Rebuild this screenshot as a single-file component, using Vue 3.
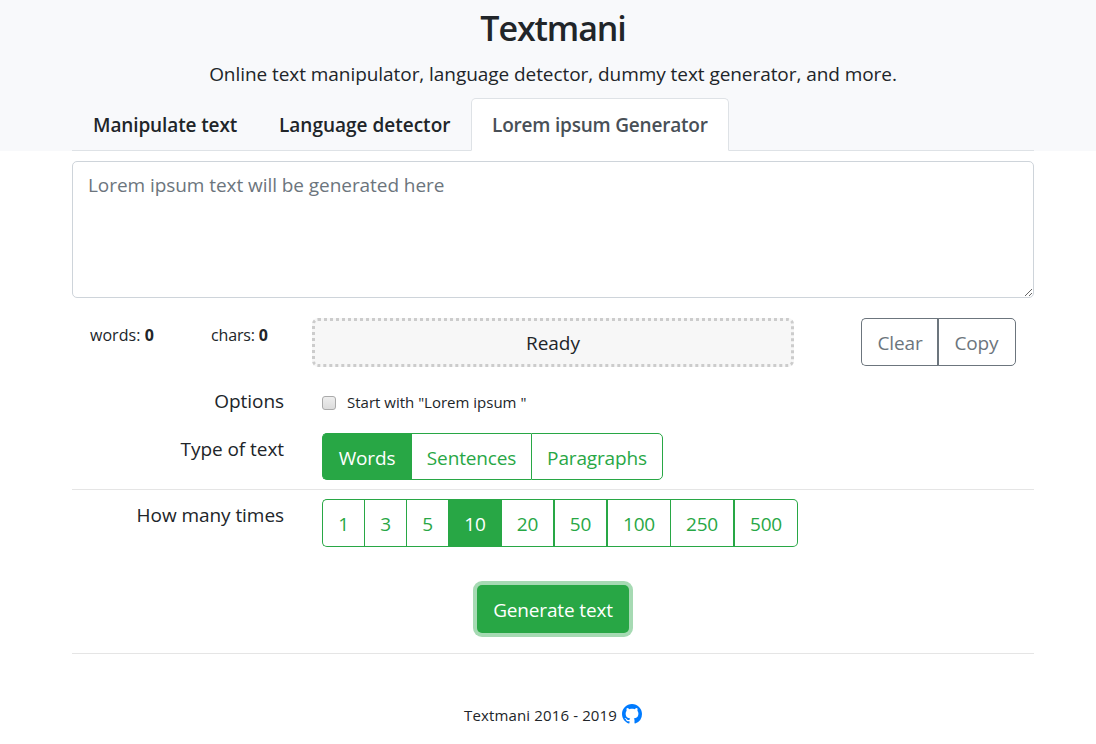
<script setup>
import { ref } from 'vue'

const tabs = [
  { label: 'Manipulate text', key: 'manipulate' },
  { label: 'Language detector', key: 'language' },
  { label: 'Lorem ipsum Generator', key: 'lorem' },
]
const activeTab = ref('lorem')
const types = [
  { label: 'Words', key: 'words' },
  { label: 'Sentences', key: 'sentences' },
  { label: 'Paragraphs', key: 'paragraphs' },
]
const type = ref('words')
const counts = [1, 3, 5, 10, 20, 50, 100, 250, 500]
const count = ref(10)
const startWithLorem = ref(false)
const output = ref('')
</script>

<template>
  <div class="page">
    <header class="header">
      <h1><span>Textmani</span></h1>
      <p class="lead"><span>Online text manipulator, language detector, dummy text generator, and more.</span></p>
      <nav class="tabs">
        <a v-for="t in tabs" :key="t.key" class="tab" :class="[t.key, { active: activeTab === t.key }]" @click="activeTab = t.key"><span>{{ t.label }}</span></a>
      </nav>
    </header>
    <main class="container">
      <textarea v-model="output" class="output" placeholder="Lorem ipsum text will be generated here"></textarea>

      <section class="status-row">
        <div class="stat words-stat">words: <b>0</b></div>
        <div class="stat chars-stat">chars: <b>0</b></div>
        <div class="status"><span>Ready</span></div>
        <div class="group grey">
          <button class="btn clear"><span>Clear</span></button>
          <button class="btn copy"><span>Copy</span></button>
        </div>
      </section>

      <section class="row options">
        <div class="label"><span>Options</span></div>
        <label class="check"><input v-model="startWithLorem" type="checkbox"><span>Start with "Lorem ipsum "</span></label>
      </section>

      <section class="row types">
        <div class="label"><span>Type of text</span></div>
        <div class="group">
          <button v-for="t in types" :key="t.key" class="btn" :class="[t.key, { on: type === t.key }]" @click="type = t.key"><span>{{ t.label }}</span></button>
        </div>
      </section>

      <section class="row times">
        <div class="label"><span>How many times</span></div>
        <div class="group">
          <button v-for="n in counts" :key="n" class="btn" :class="['n' + n, { on: count === n }]" @click="count = n"><span>{{ n }}</span></button>
        </div>
      </section>

      <section class="submit">
        <button class="generate"><span>Generate text</span></button>
      </section>
    </main>
    <footer class="footer">
      <span>Textmani 2016 - 2019</span>
      <svg viewBox="0 0 16 16" width="20" height="20" aria-hidden="true">
        <path fill="#007bff" fill-rule="evenodd" d="M8 0C3.58 0 0 3.58 0 8c0 3.54 2.29 6.53 5.47 7.59.4.07.55-.17.55-.38 0-.19-.01-.82-.01-1.49-2.01.37-2.53-.49-2.69-.94-.09-.23-.48-.94-.82-1.13-.28-.15-.68-.52-.01-.53.63-.01 1.08.58 1.23.82.72 1.21 1.87.87 2.33.66.07-.52.28-.87.51-1.07-1.78-.2-3.64-.89-3.64-3.95 0-.87.31-1.59.82-2.15-.08-.2-.36-1.02.08-2.12 0 0 .67-.21 2.2.82.64-.18 1.32-.27 2-.27s1.36.09 2 .27c1.53-1.04 2.2-.82 2.2-.82.44 1.1.16 1.92.08 2.12.51.56.82 1.27.82 2.15 0 3.07-1.87 3.75-3.65 3.95.29.25.54.73.54 1.48 0 1.07-.01 1.93-.01 2.2 0 .21.15.46.55.38A8.01 8.01 0 0 0 16 8c0-4.42-3.58-8-8-8z" />
      </svg>
    </footer>
  </div>
</template>

<style>
html,
body {
  background: #fff;
}
</style>

<style scoped>
.page {
  font-family: "Open Sans", "Noto Sans", sans-serif;
  font-size: 19px;
  letter-spacing: -0.06px;
  line-height: 30px;
  color: #212529;
  height: 744px;
  overflow: hidden;
}
.page * {
  box-sizing: border-box;
}
span {
  white-space: nowrap;
}
.header {
  height: 151px;
  background: #f8f9fb;
  padding: 0 62px 0 72px;
  display: flex;
  flex-direction: column;
}
h1 {
  margin: 0;
  padding-top: 6px;
  height: 59px;
  font-size: 34px;
  line-height: 44px;
  font-weight: 600;
  letter-spacing: -1.1px;
  text-align: center;
}
.lead {
  margin: 0;
  height: 39px;
  text-align: center;
}
.tabs {
  display: flex;
  height: 53px;
  border-bottom: 1px solid #dee2e6;
}
.tab {
  height: 53px;
  padding: 12px 0 0 21px;
  font-weight: 600;
  letter-spacing: 0;
  cursor: pointer;
}
.tab.manipulate {
  width: 186px;
  letter-spacing: -0.12px;
}
.tab.language {
  width: 213px;
}
.tab.lorem {
  width: 258px;
  letter-spacing: -0.2px;
}
.tab.active {
  padding: 11px 0 0 20px;
  background: #fff;
  color: #495057;
  border: 1px solid #dee2e6;
  border-bottom-color: #fff;
  border-radius: 5px 5px 0 0;
}
.container {
  margin: 10px 62px 0 72px;
}
.output {
  display: block;
  width: 962px;
  height: 137px;
  margin: 0;
  padding: 8px 15px;
  border: 1px solid #ced4da;
  border-radius: 5px;
  font: inherit;
  letter-spacing: inherit;
  color: #495057;
  resize: vertical;
}
.output::placeholder {
  color: #6c757d;
  opacity: 1;
}
.status-row {
  display: flex;
  margin-top: 20px;
  height: 49px;
}
.stat {
  font-size: 16px;
  line-height: 34px;
  white-space: nowrap;
}
.words-stat {
  width: 139px;
  padding-left: 18px;
  letter-spacing: 0.05px;
}
.chars-stat {
  width: 101px;
  letter-spacing: -0.15px;
}
.status {
  width: 482px;
  height: 49px;
  border: 3px dotted #ccc;
  border-radius: 6px;
  background: #f7f7f7;
  text-align: center;
  line-height: 45px;
}
.status-row .group {
  margin-left: 67px;
}
.group {
  display: flex;
  height: 48px;
}
.btn {
  font: inherit;
  letter-spacing: -0.15px;
  margin: 0;
  padding: 2px 0 0;
  border: solid #28a745;
  border-width: 1px 0 1px 1px;
  background: #fff;
  color: #28a745;
  text-align: center;
  cursor: pointer;
}
.btn:first-child {
  border-radius: 5px 0 0 5px;
}
.btn:last-child {
  border-right-width: 1px;
  border-radius: 0 5px 5px 0;
}
.btn.on {
  background: #28a745;
  color: #fff;
}
.grey .btn {
  border-color: #6c757d;
  color: #6c757d;
}
.clear {
  width: 77px;
}
.grey .copy {
  width: 78px;
  padding-right: 1px;
  border-left-width: 1px;
  box-shadow: -1px 0 0 #6c757d;
}
.row {
  display: flex;
}
.label {
  width: 212px;
  margin-right: 38px;
  text-align: right;
}
.options {
  margin-top: 19px;
  height: 47px;
}
.check {
  display: flex;
  font-size: 15px;
  letter-spacing: 0;
  line-height: 32px;
}
.check input {
  appearance: none;
  width: 14px;
  height: 14px;
  margin: 10px 11px 0 0;
  border: 1px solid #aaa;
  border-radius: 3px;
  background: linear-gradient(#eee, #dcdcdc);
}
.types {
  height: 57px;
  border-bottom: 1px solid #e5e5e5;
}
.types .group {
  height: 47px;
}
.types .label {
  padding-top: 1px;
}
.words {
  width: 90px;
  padding-right: 1px;
}
.sentences {
  width: 119px;
  border-left-width: 0;
}
.paragraphs {
  width: 132px;
}
.times {
  margin-top: 9px;
  height: 82px;
}
.times .label {
  padding-top: 1px;
}
.n1,
.n3,
.n5 {
  width: 42px;
}
.n10 {
  width: 54px;
  padding-right: 1px;
}
.n20 {
  width: 51px;
  border-left-width: 0;
}
.n50 {
  width: 53px;
  border-left-width: 2px;
}
.n100 {
  width: 64px;
  border-left-width: 2px;
}
.n250 {
  width: 63px;
}
.n500 {
  width: 65px;
  border-left-width: 2px;
}
.submit {
  height: 73px;
  padding-top: 4px;
  border-bottom: 1px solid #e5e5e5;
  text-align: center;
}
.generate {
  display: block;
  width: 152px;
  height: 48px;
  margin: 0 auto;
  padding: 2px 0 0;
  border: 0;
  border-radius: 5px;
  background: #28a745;
  box-shadow: 0 0 0 4px #a6dab3;
  font: inherit;
  letter-spacing: -0.15px;
  color: #fff;
}
.footer {
  display: flex;
  padding: 46px 0 0 464px;
  font-size: 15px;
  letter-spacing: 0.14px;
  line-height: 30px;
}
.footer span {
  width: 158px;
}
.footer svg {
  margin-top: 4px;
}
</style>
